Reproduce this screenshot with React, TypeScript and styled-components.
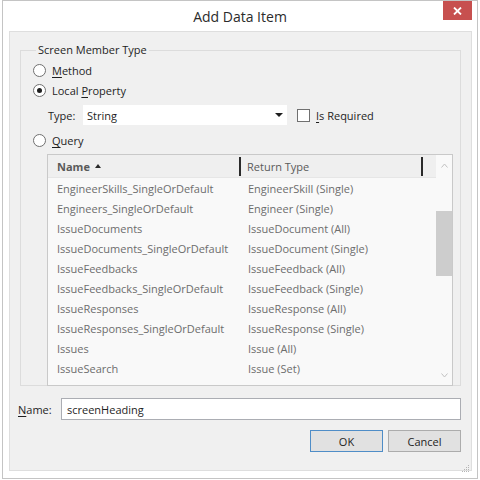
import styled, { createGlobalStyle } from 'styled-components';

const rows: [string, string][] = [
	['EngineerSkills_SingleOrDefault', 'EngineerSkill (Single)'],
	['Engineers_SingleOrDefault', 'Engineer (Single)'],
	['IssueDocuments', 'IssueDocument (All)'],
	['IssueDocuments_SingleOrDefault', 'IssueDocument (Single)'],
	['IssueFeedbacks', 'IssueFeedback (All)'],
	['IssueFeedbacks_SingleOrDefault', 'IssueFeedback (Single)'],
	['IssueResponses', 'IssueResponse (All)'],
	['IssueResponses_SingleOrDefault', 'IssueResponse (Single)'],
	['Issues', 'Issue (All)'],
	['IssueSearch', 'Issue (Set)'],
];

const GlobalStyle = createGlobalStyle`
	html, body {
		margin: 0;
		padding: 0;
		background: #ffffff;
	}
	body {
		font-family: 'Open Sans', 'Noto Sans', sans-serif;
		font-size: 11px;
		color: #1e1e1e;
	}
`;

const Window = styled.div`
	box-sizing: border-box;
	width: 476px;
	height: 479px;
	margin-left: 2px;
	border: 1px solid #c4c4c4;
	background: #ffffff;
	display: flex;
	flex-direction: column;
`;

const TitleBar = styled.div`
	height: 30px;
	display: grid;
	grid-template-columns: 1fr auto 1fr;
	align-items: start;
`;

const Title = styled.div`
	grid-column: 2;
	padding-top: 6px;
	font-size: 14px;
	color: #2b2b2b;
`;

const CloseButton = styled.div`
	grid-column: 3;
	justify-self: end;
	margin-right: 5px;
	width: 29px;
	height: 19px;
	background: #c7504f;
	display: flex;
	align-items: center;
	justify-content: center;
`;

const Client = styled.div`
	flex: 1;
	margin: 0 5px 7px 6px;
	border: 1px solid #dedede;
	background: #f0f0f0;
	padding: 0 10px 0 10px;
	display: flex;
	flex-direction: column;
`;

const Group = styled.fieldset`
	margin: 10px 0 0 0;
	padding: 2px 7px 6px 12px;
	border: 1px solid #dcdcdc;
	min-width: 0;
	height: 344px;
	box-sizing: border-box;
`;

const Legend = styled.legend`
	padding: 0 2px;
	margin-left: 3px;
	line-height: 16px;
	color: #1e1e1e;
`;

const RadioRow = styled.label`
	height: 20px;
	display: flex;
	align-items: center;
	gap: 6px;
`;

const Radio = styled.span<{ $checked?: boolean }>`
	box-sizing: border-box;
	width: 13px;
	height: 13px;
	border-radius: 50%;
	border: 1px solid #707070;
	background: #ffffff;
	display: flex;
	align-items: center;
	justify-content: center;

	&::after {
		content: '';
		width: 5px;
		height: 5px;
		border-radius: 50%;
		background: ${({ $checked }) => ($checked ? '#1e1e1e' : 'transparent')};
	}
`;

const TypeRow = styled.div`
	height: 22px;
	margin: 4px 0 4px 15px;
	display: flex;
	align-items: center;
`;

const TypeLabel = styled.span`
	width: 35px;
`;

const Combo = styled.div`
	width: 204px;
	height: 20px;
	background: #ffffff;
	display: flex;
	align-items: center;
	justify-content: space-between;
	padding: 0 4px 0 4px;
	box-sizing: border-box;
`;

const Arrow = styled.span`
	width: 0;
	height: 0;
	border-left: 4px solid transparent;
	border-right: 4px solid transparent;
	border-top: 4px solid #1e1e1e;
`;

const CheckRow = styled.label`
	margin-left: 10px;
	display: flex;
	align-items: center;
	gap: 6px;
`;

const Checkbox = styled.span`
	box-sizing: border-box;
	width: 13px;
	height: 13px;
	border: 1px solid #707070;
	background: #ffffff;
`;

const ListBox = styled.div`
	margin: 4px 0 0 14px;
	height: 232px;
	box-sizing: border-box;
	border: 1px solid #c9c9c9;
	background: #f9f9f9;
	display: flex;
	overflow: hidden;
`;

const ListBody = styled.div`
	flex: 1;
	overflow: hidden;
`;

const Columns = styled.div`
	display: grid;
	grid-template-columns: 193px 182px 1fr;
`;

const Header = styled(Columns)`
	height: 22px;
	background: #efefef;
	border-bottom: 1px solid #e6e6e6;
	align-items: center;
	color: #5a5a5a;
`;

const HeadCell = styled.div<{ $bold?: boolean; $first?: boolean }>`
	height: 19px;
	display: flex;
	align-items: center;
	gap: 5px;
	padding-left: ${({ $first }) => ($first ? '9px' : '6px')};
	border-right: 2px solid #2a2a2a;
	font-weight: ${({ $bold }) => ($bold ? 700 : 400)};
`;

const SortArrow = styled.span`
	width: 0;
	height: 0;
	border-left: 3px solid transparent;
	border-right: 3px solid transparent;
	border-bottom: 4px solid #2a2a2a;
`;

const Row = styled(Columns)`
	height: 20px;
	align-items: center;
	color: #6d6d6d;
`;

const Cell = styled.div<{ $first?: boolean }>`
	padding-left: ${({ $first }) => ($first ? '9px' : '7px')};
	white-space: nowrap;
`;

const ScrollBar = styled.div`
	width: 16px;
	display: flex;
	flex-direction: column;
	align-items: center;
	background: #f9f9f9;
`;

const ScrollArrow = styled.div`
	height: 20px;
	display: flex;
	align-items: center;
	justify-content: center;
`;

const Thumb = styled.div`
	margin-top: 36px;
	width: 16px;
	height: 65px;
	background: #cdcdcd;
`;

const Spacer = styled.div`
	flex: 1;
`;

const NameRow = styled.div`
	margin: 12px 0 0 -2px;
	display: flex;
	align-items: center;
	gap: 9px;
`;

const NameLabel = styled.span`
	width: 34px;
`;

const NameInput = styled.div`
	flex: 1;
	height: 22px;
	box-sizing: border-box;
	border: 1px solid #abadb3;
	background: #ffffff;
	padding-left: 5px;
	display: flex;
	align-items: center;
	color: #1e1e1e;
`;

const ButtonRow = styled.div`
	margin-top: 10px;
	display: flex;
	justify-content: flex-end;
	gap: 5px;
`;

const Button = styled.div<{ $default?: boolean }>`
	width: 73px;
	height: 22px;
	box-sizing: border-box;
	border: 1px solid ${({ $default }) => ($default ? '#4f8dc7' : '#acacac')};
	background: #e1e1e1;
	display: flex;
	align-items: center;
	justify-content: center;
	color: #1e1e1e;
`;

const Grip = styled.div`
	align-self: flex-end;
	margin: 0 -9px 0 0;
	width: 9px;
	height: 9px;
`;

const Key = styled.span`
	text-decoration: underline;
	text-underline-offset: 2px;
`;

export default function App() {
	return (
		<>
			<GlobalStyle />
			<Window>
				<TitleBar>
					<Title>Add Data Item</Title>
					<CloseButton>
						<svg width="9" height="8" viewBox="0 0 9 8">
							<path d="M1 0.5 L8 7.5 M8 0.5 L1 7.5" stroke="#ffffff" strokeWidth="1.8" />
						</svg>
					</CloseButton>
				</TitleBar>
				<Client>
					<Group>
						<Legend>Screen Member Type</Legend>
						<RadioRow>
							<Radio />
							<span>
								<Key>M</Key>ethod
							</span>
						</RadioRow>
						<RadioRow>
							<Radio $checked />
							<span>
								Local <Key>P</Key>roperty
							</span>
						</RadioRow>
						<TypeRow>
							<TypeLabel>Type:</TypeLabel>
							<Combo>
								<span>String</span>
								<Arrow />
							</Combo>
							<CheckRow>
								<Checkbox />
								<span>
									<Key>I</Key>s Required
								</span>
							</CheckRow>
						</TypeRow>
						<RadioRow>
							<Radio />
							<span>
								<Key>Q</Key>uery
							</span>
						</RadioRow>
						<ListBox>
							<ListBody>
								<Header>
									<HeadCell $bold $first>
										Name <SortArrow />
									</HeadCell>
									<HeadCell>Return Type</HeadCell>
									<div />
								</Header>
								{rows.map(([name, type]) => (
									<Row key={name}>
										<Cell $first>{name}</Cell>
										<Cell>{type}</Cell>
										<div />
									</Row>
								))}
							</ListBody>
							<ScrollBar>
								<ScrollArrow>
									<svg width="7" height="5" viewBox="0 0 7 5">
										<path d="M0.5 4.5 L3.5 1 L6.5 4.5" stroke="#c2c2c2" fill="none" />
									</svg>
								</ScrollArrow>
								<Thumb />
								<Spacer />
								<ScrollArrow>
									<svg width="7" height="5" viewBox="0 0 7 5">
										<path d="M0.5 0.5 L3.5 4 L6.5 0.5" stroke="#c2c2c2" fill="none" />
									</svg>
								</ScrollArrow>
							</ScrollBar>
						</ListBox>
					</Group>
					<NameRow>
						<NameLabel>
							<Key>N</Key>ame:
						</NameLabel>
						<NameInput>screenHeading</NameInput>
					</NameRow>
					<ButtonRow>
						<Button $default>OK</Button>
						<Button>Cancel</Button>
					</ButtonRow>
					<Spacer />
					<Grip>
						<svg width="9" height="9" viewBox="0 0 9 9">
							<g fill="#b5b5b5">
								<rect x="7" y="1" width="1" height="1" />
								<rect x="5" y="3" width="1" height="1" />
								<rect x="7" y="3" width="1" height="1" />
								<rect x="3" y="5" width="1" height="1" />
								<rect x="5" y="5" width="1" height="1" />
								<rect x="7" y="5" width="1" height="1" />
								<rect x="1" y="7" width="1" height="1" />
								<rect x="3" y="7" width="1" height="1" />
								<rect x="5" y="7" width="1" height="1" />
								<rect x="7" y="7" width="1" height="1" />
							</g>
						</svg>
					</Grip>
				</Client>
			</Window>
		</>
	);
}
